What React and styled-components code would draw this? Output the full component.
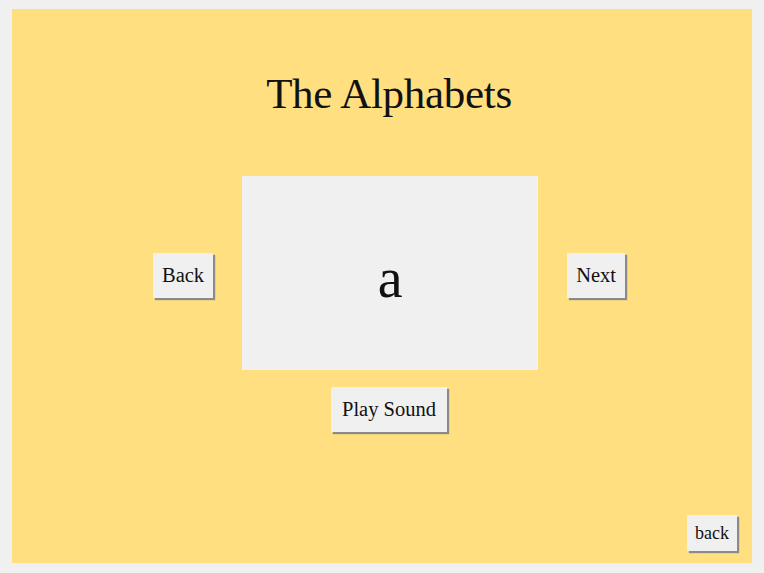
import { useState } from 'react';
import styled, { createGlobalStyle } from 'styled-components';

const GlobalStyle = createGlobalStyle`
  html, body {
    margin: 0;
    background: #f0f0f0;
  }
  body {
    padding: 9px 12px 10px 12px;
    font-family: "Liberation Serif", "DejaVu Serif", serif;
    color: #111;
  }
`;

const Panel = styled.main`
  display: flex;
  flex-direction: column;
  align-items: center;
  box-sizing: border-box;
  width: 740px;
  height: 554px;
  padding: 60px 15px 11px 29px;
  background: #ffdf80;
`;

const Title = styled.h1`
  margin: 0;
  font-size: 43px;
  font-weight: 400;
  letter-spacing: -0.3px;
`;

const Row = styled.section`
  display: flex;
  align-items: center;
  gap: 29px;
  margin-top: 58px;
`;

const Card = styled.div`
  display: flex;
  align-items: center;
  justify-content: center;
  width: 296px;
  height: 194px;
  background: #f0f0f0;
  font-size: 56px;
  padding-top: 10px;
  box-sizing: border-box;
`;

const Button = styled.button`
  font-family: inherit;
  font-size: ${(p) => (p.$small ? '18px' : '20.5px')};
  color: #111;
  background: #f0f0f0;
  border: none;
  padding: ${(p) => (p.$small ? '7.5px 8px' : '11px 9px')};
  box-shadow: 2px 2px 1px #8a8a8a;
  cursor: pointer;
`;

const SideButton = styled(Button)`
  margin-top: 5px;
`;

const Footer = styled.footer`
  display: flex;
  justify-content: flex-end;
  align-self: stretch;
  margin-top: auto;
  padding-bottom: 1px;
`;

const PlayWrap = styled.div`
  margin-top: 17px;

  & > button {
    padding-left: 11px;
    padding-right: 11px;
  }
`;

const letters = 'abcdefghijklmnopqrstuvwxyz'.split('');

export default function App() {
  const [index, setIndex] = useState(0);

  return (
    <>
      <GlobalStyle />
      <Panel>
        <Title>The Alphabets</Title>
        <Row>
          <SideButton onClick={() => setIndex((i) => (i + 25) % 26)}>Back</SideButton>
          <Card>{letters[index]}</Card>
          <SideButton onClick={() => setIndex((i) => (i + 1) % 26)}>Next</SideButton>
        </Row>
        <PlayWrap>
          <Button>Play Sound</Button>
        </PlayWrap>
        <Footer>
          <Button $small>back</Button>
        </Footer>
      </Panel>
    </>
  );
}
